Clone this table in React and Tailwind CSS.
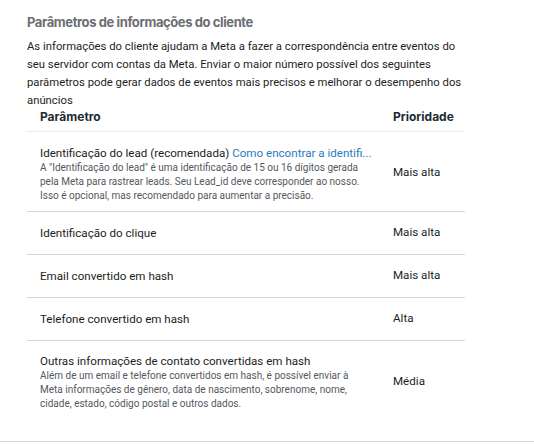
import React from 'react';

const rows = [
  {
    title: 'Identificação do lead (recomendada)',
    link: 'Como encontrar a identifi...',
    desc: 'A "Identificação do lead" é uma identificação de 15 ou 16 dígitos gerada pela Meta para rastrear leads. Seu Lead_id deve corresponder ao nosso. Isso é opcional, mas recomendado para aumentar a precisão.',
    priority: 'Mais alta',
  },
  { title: 'Identificação do clique', priority: 'Mais alta' },
  { title: 'Email convertido em hash', priority: 'Mais alta' },
  { title: 'Telefone convertido em hash', priority: 'Alta' },
  {
    title: 'Outras informações de contato convertidas em hash',
    desc: 'Além de um email e telefone convertidos em hash, é possível enviar à Meta informações de gênero, data de nascimento, sobrenome, nome, cidade, estado, código postal e outros dados.',
    priority: 'Média',
  },
];

export default function App() {
  return (
    <div className="w-[534px] h-[444px] bg-white font-['Roboto',Helvetica,sans-serif] text-[#1c1e21] overflow-hidden flex flex-col">
      <div className="pl-[27px] pt-[12px]">
        {/* Heading */}
        <h2 className="font-['Inter',sans-serif] font-bold text-[13px] tracking-[-0.4px] leading-[20px] text-[#6b6e73]">
          Parâmetros de informações do cliente
        </h2>
        <p className="mt-[6px] text-[11.3px] leading-[18px] w-[440px]">
          As informações do cliente ajudam a Meta a fazer a correspondência entre eventos do seu servidor com contas da Meta. Enviar o maior número possível dos seguintes parâmetros pode gerar dados de eventos mais precisos e melhorar o desempenho dos anúncios
        </p>

        {/* Table */}
        <div className="w-[438px]">
          <div className="flex items-start h-[22px] border-b border-[#e8eaed] pl-[13px] font-['Inter',sans-serif] font-bold text-[12px] leading-[14px] text-[#1c2b33]">
            <div className="flex-1">Parâmetro</div>
            <div className="w-[72px]">Prioridade</div>
          </div>
          {rows.map((r, i) => (
            <div
              key={i}
              className={
                'flex items-center pl-[13px] border-[#d4d7dc] ' +
                (i < rows.length - 1 ? 'border-b ' : '') +
                (r.desc ? (i === 0 ? 'h-[80px] pt-[5px]' : 'h-[82px]') : 'h-[43px]')
              }
            >
              <div className="flex-1 min-w-0 pr-3">
                <div className="text-[11.6px] leading-[15px] whitespace-nowrap">
                  {r.title}
                  {r.link && <span className="text-[#2a7bbd]"> {r.link}</span>}
                </div>
                {r.desc && (
                  <div className="text-[10px] leading-[14px] text-[#545960] w-[330px]">
                    {r.desc}
                  </div>
                )}
              </div>
              <div className={'w-[72px] text-[11.6px] ' + (i === 0 ? '-mt-[2px]' : '')}>{r.priority}</div>
            </div>
          ))}
        </div>
      </div>
      <div className="mt-auto mb-[2px] border-b border-[#d4d7dc]" />
    </div>
  );
}
